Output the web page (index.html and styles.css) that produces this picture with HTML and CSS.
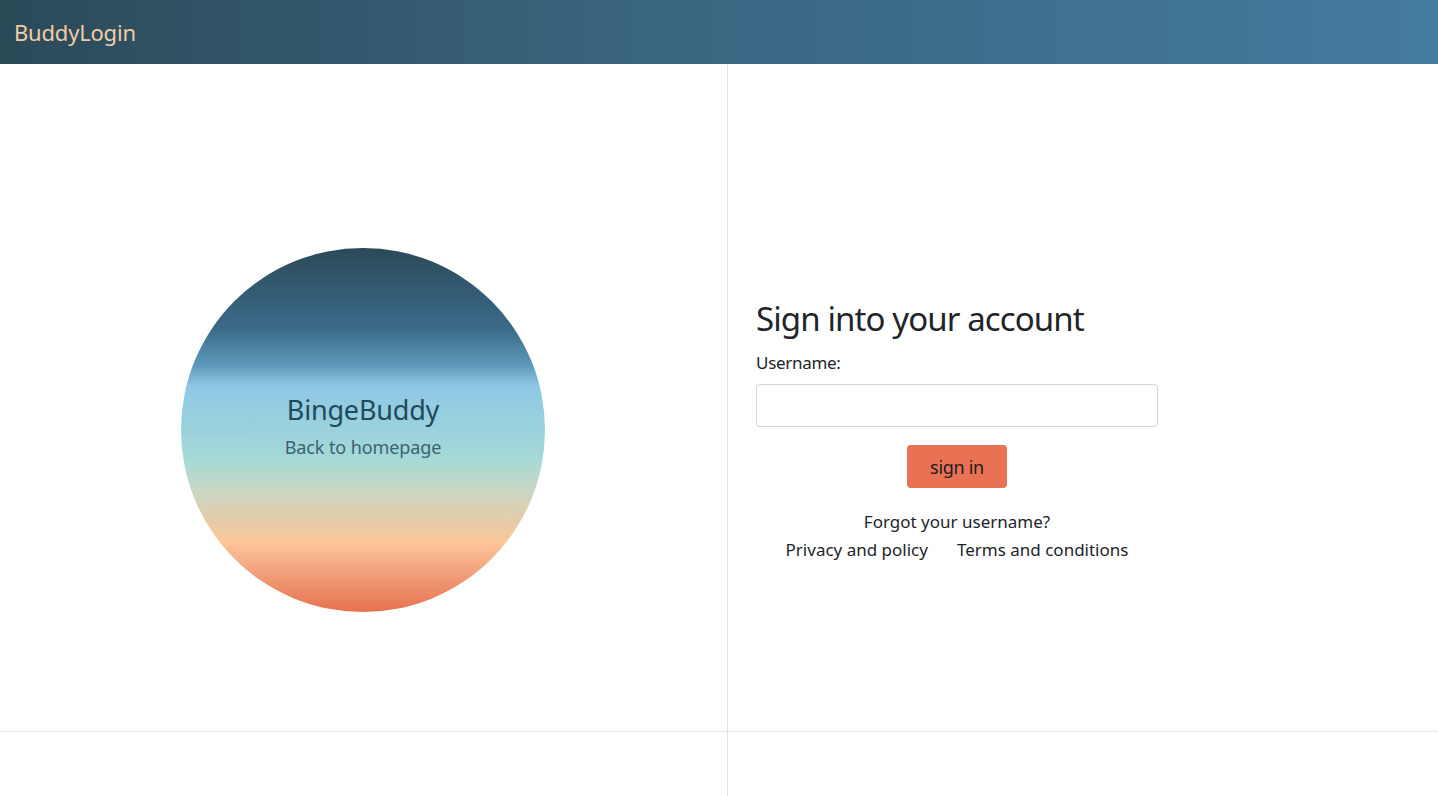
FILE: index.html
```html
<!DOCTYPE html>
<html lang="en">
<head>
<meta charset="utf-8">
<title>BuddyLogin</title>
<link rel="stylesheet" href="styles.css">
</head>
<body>
<header class="topbar">
  <span class="brand">BuddyLogin</span>
</header>
<main class="split">
  <section class="pane pane-left">
    <div class="orb">
      <div class="orb-title">BingeBuddy</div>
      <a class="orb-link" href="#">Back to homepage</a>
    </div>
  </section>
  <section class="pane pane-right">
    <form class="login">
      <h1 class="login-title">Sign into your account</h1>
      <label class="login-label" for="u">Username:</label>
      <input class="login-input" id="u" type="text">
      <div class="login-actions">
        <button class="login-btn" type="button">sign in</button>
      </div>
      <div class="login-links">
        <a href="#" class="link">Forgot your username?</a>
        <div class="link-row">
          <a href="#" class="link">Privacy and policy</a>
          <a href="#" class="link">Terms and conditions</a>
        </div>
      </div>
    </form>
  </section>
  <div class="footer-line"></div>
</main>
</body>
</html>
```

FILE: styles.css
```css
* { box-sizing: border-box; }
html, body { margin: 0; padding: 0; height: 100%; }
body {
  font-family: "Noto Sans", "Open Sans", sans-serif;
  color: #212529;
  background: #fff;
  overflow: hidden;
}
.topbar {
  height: 64px;
  display: flex;
  align-items: center;
  padding-left: 14px;
  background: linear-gradient(90deg, #2b4a58 0%, #3a6580 45%, #437b9e 100%);
}
.brand {
  color: #f1cda6;
  font-size: 22px;
  letter-spacing: -0.2px;
}
.split {
  position: relative;
  display: grid;
  grid-template-columns: 728px 1fr;
  height: calc(100vh - 64px);
}
.pane {
  display: flex;
  align-items: center;
}
.pane-left {
  justify-content: center;
  border-right: 1px solid #e3e3e3;
}
.pane-right {
  padding-left: 28px;
}
.footer-line {
  position: absolute;
  left: 0;
  right: 0;
  top: 667px;
  height: 1px;
  background: #e3e3e3;
}
.orb {
  width: 364px;
  height: 364px;
  border-radius: 50%;
  margin-right: 1px;
  padding-bottom: 6px;
  display: flex;
  flex-direction: column;
  align-items: center;
  justify-content: center;
  background: linear-gradient(180deg,
    #2b4a58 0%,
    #3a6a88 22%,
    #5d97b8 32%,
    #8fc8e5 38%,
    #9bd2dc 50%,
    #a6d9d6 58%,
    #c6d7c4 66%,
    #e8cba6 76%,
    #fdc598 81%,
    #f09d78 90%,
    #e8714f 100%);
}
.orb-title {
  color: #1f4a5e;
  font-size: 27px;
  line-height: 32px;
  letter-spacing: -0.2px;
}
.orb-link {
  color: #3b6273;
  font-size: 18px;
  line-height: 26px;
  margin-top: 8px;
  text-decoration: none;
  letter-spacing: -0.1px;
}
.login {
  width: 402px;
  display: flex;
  flex-direction: column;
  padding-top: 3px;
}
.login-title {
  margin: 0 0 11px;
  font-weight: 400;
  font-size: 33px;
  line-height: 40px;
  color: #212529;
  letter-spacing: -0.9px;
}
.login-label {
  font-size: 17px;
  line-height: 26px;
  margin-bottom: 8px;
  letter-spacing: -0.3px;
}
.login-input {
  height: 43px;
  border: 1px solid #d3d6d9;
  border-radius: 4px;
  font: inherit;
  padding: 0 12px;
}
.login-actions {
  display: flex;
  justify-content: center;
  margin-top: 18px;
}
.login-btn {
  width: 100px;
  height: 43px;
  background: #e87253;
  border: none;
  border-radius: 4px;
  color: #1d1d1d;
  font-family: inherit;
  font-size: 18px;
  letter-spacing: -0.3px;
}
.login-links {
  display: flex;
  flex-direction: column;
  align-items: center;
  margin-top: 20px;
}
.link-row {
  display: flex;
  gap: 29px;
}
.link {
  color: #212529;
  text-decoration: none;
  font-size: 17px;
  line-height: 28px;
  letter-spacing: 0;
}
```
